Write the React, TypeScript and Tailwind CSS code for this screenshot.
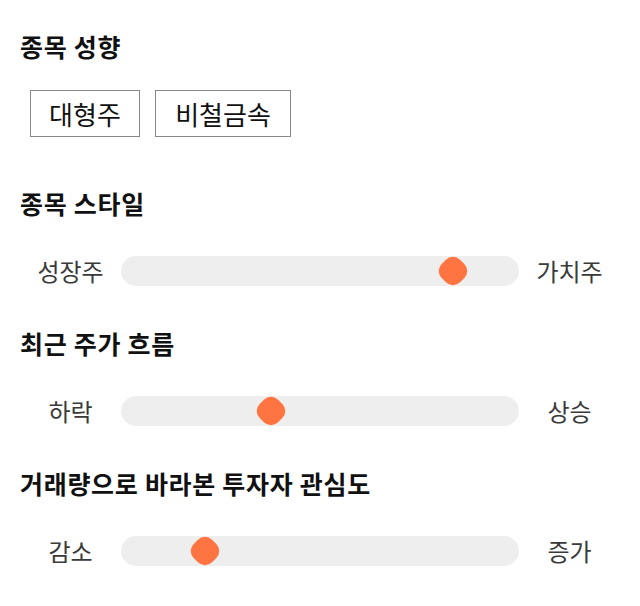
const font = { fontFamily: '"Noto Sans CJK KR", "Noto Sans", sans-serif' };

interface SliderRowProps {
  left: string;
  right: string;
  value: number; // thumb centre, px from track start
}

function SliderRow({ left, right, value }: SliderRowProps) {
  return (
    <div className="flex h-[30px] items-center">
      <div className="w-[101px] text-center text-[24px] leading-[30px] text-[#3a3a3a]">{left}</div>
      <div className="relative h-[30px] w-[398px] rounded-full bg-[#eeeeee]">
        <div
          className="absolute top-[2px] h-[26px] w-[26px] rotate-45 rounded-[10px] bg-[#ff7440]"
          style={{ left: value - 13 }}
        />
      </div>
      <div className="w-[101px] text-center text-[24px] leading-[30px] text-[#3a3a3a]">{right}</div>
    </div>
  );
}

function Heading({ children, className = "" }: { children: string; className?: string }) {
  return (
    <h2
      className={`h-[30px] text-[25px] font-bold leading-[30px] tracking-[0.7px] text-[#111] ${className}`}
    >
      {children}
    </h2>
  );
}

export default function App() {
  return (
    <div className="min-h-[606px] w-[640px] bg-white px-[20px] pt-[31px]" style={font}>
      <Heading>종목 성향</Heading>
      <div className="mt-[29px] flex gap-[15px] pl-[10px]">
        <div className="flex h-[47px] w-[110px] items-center justify-center border border-[#888] text-[26px] text-[#111]">
          대형주
        </div>
        <div className="flex h-[47px] w-[136px] items-center justify-center border border-[#888] text-[26px] text-[#111]">
          비철금속
        </div>
      </div>

      <Heading className="mt-[51px]">종목 스타일</Heading>
      <div className="mt-[38px]">
        <SliderRow left="성장주" right="가치주" value={332} />
      </div>

      <Heading className="mt-[42px]">최근 주가 흐름</Heading>
      <div className="mt-[38px]">
        <SliderRow left="하락" right="상승" value={150} />
      </div>

      <Heading className="mt-[42px]">거래량으로 바라본 투자자 관심도</Heading>
      <div className="mt-[38px]">
        <SliderRow left="감소" right="증가" value={84} />
      </div>
    </div>
  );
}
